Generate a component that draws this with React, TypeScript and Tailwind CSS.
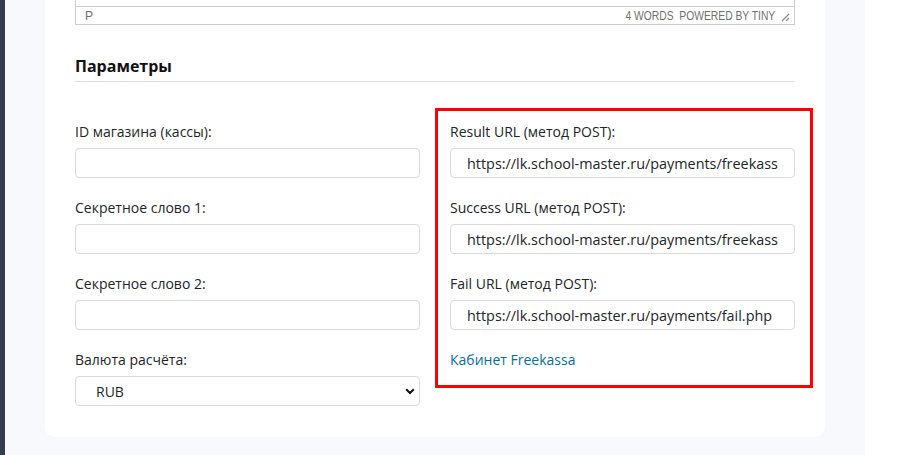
import React from "react";

const font = { fontFamily: '"Open Sans", "Noto Sans", sans-serif' };

function Field({ label, value }: { label: string; value?: string }) {
  return (
    <div className="flex flex-col">
      <label className="text-[14px] leading-[20px] text-[#212529] mb-[6px]">{label}</label>
      <input
        readOnly
        value={value ?? ""}
        className="h-[30px] w-full rounded-[4px] border border-[#d9d9d9] bg-white pl-[16px] pr-[16px] text-[14.4px] text-[#212529] outline-none"
        style={font}
      />
    </div>
  );
}

export default function App() {
  return (
    <div className="flex h-[455px] w-[898px] overflow-hidden bg-white" style={font}>
      <div className="w-[5px] shrink-0 bg-[#353a4f]" />
      <div className="w-[860px] shrink-0 bg-[#f8f9fd] px-[40px]">
        <div className="rounded-b-[10px] bg-white px-[30px] pb-[31px]">
          {/* editor footer */}
          <div className="border-x border-b border-[#cccccc]">
            <div className="h-[6px]" />
            <div
              className="flex h-[18px] items-center border-t border-[#cccccc] pl-[9px] pr-[4px] text-[12px] uppercase text-[#707070]"
              style={{ fontFamily: '"Liberation Sans", Arial, sans-serif' }}
            >
              <span>p</span>
              <span className="ml-auto inline-block origin-right scale-x-[0.86] whitespace-nowrap">
                4 words&nbsp;&nbsp;powered by tiny
              </span>
              <svg width="10" height="10" viewBox="0 0 10 10" className="ml-[5px] mt-[3px]">
                <path d="M9 2 L2 9 M9 6 L6 9" stroke="#8a8a8a" strokeWidth="1.2" />
              </svg>
            </div>
          </div>

          <h3 className="mt-[29px] border-b border-[#dcdde4] pb-[3px] text-[16px] font-bold leading-[24px] text-[#111]">
            Параметры
          </h3>

          <div className="mt-[40px] grid grid-cols-2 gap-x-[30px]">
            <div className="flex flex-col gap-[20px]">
              <Field label="ID магазина (кассы):" />
              <Field label="Секретное слово 1:" />
              <Field label="Секретное слово 2:" />
              <div className="flex flex-col">
                <label className="text-[14px] leading-[20px] text-[#212529] mb-[6px]">Валюта расчёта:</label>
                <div className="relative">
                  <select
                    className="h-[30px] w-full appearance-none rounded-[4px] border border-[#d9d9d9] bg-white pl-[20px] text-[14px] text-[#212529] outline-none"
                    style={font}
                    defaultValue="RUB"
                  >
                    <option value="RUB">RUB</option>
                  </select>
                  <svg
                    width="10"
                    height="7"
                    viewBox="0 0 10 7"
                    className="pointer-events-none absolute right-[5px] top-[12px]"
                  >
                    <path d="M1.2 1.2 L5 5 L8.8 1.2" stroke="#111" strokeWidth="2" fill="none" />
                  </svg>
                </div>
              </div>
            </div>

            <div className="relative flex flex-col gap-[20px]">
              <div className="pointer-events-none absolute -left-[15px] -right-[18px] -top-[14px] h-[280px] border-[3px] border-[#ff0000]" />
              <Field label="Result URL (метод POST):" value="https://lk.school-master.ru/payments/freekassa.php" />
              <Field label="Success URL (метод POST):" value="https://lk.school-master.ru/payments/freekassa_success.php" />
              <Field label="Fail URL (метод POST):" value="https://lk.school-master.ru/payments/fail.php" />
              <a href="#" className="text-[14px] leading-[20px] text-[#0a6c9b]">
                Кабинет Freekassa
              </a>
            </div>
          </div>
        </div>
      </div>
      <div className="flex-1 bg-white" />
    </div>
  );
}
